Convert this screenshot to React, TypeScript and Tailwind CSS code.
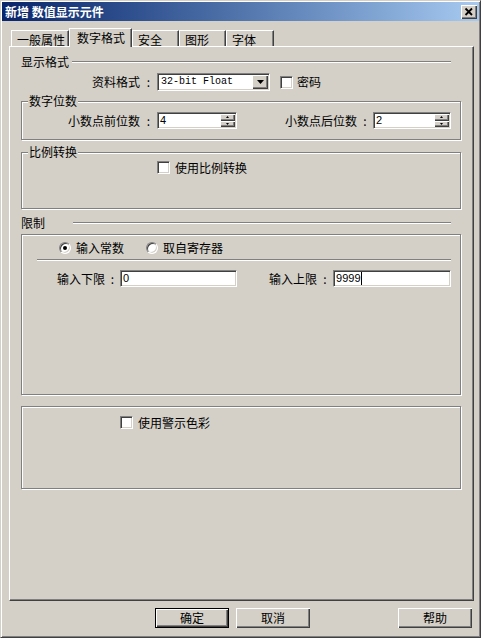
import React from "react"

const cjk = "font-['Noto_Sans_CJK_SC',sans-serif]"
const sunken =
  "bg-white border border-t-[#808080] border-l-[#808080] border-r-white border-b-white shadow-[inset_1px_1px_#404040,inset_-1px_-1px_#d4d0c8]"
const raised = "bg-[#d4d0c8] shadow-[inset_1px_1px_#fff,inset_-1px_-1px_#404040,inset_-2px_-2px_#808080]"
const etched = "border border-[#808080] shadow-[inset_1px_1px_#fff,1px_1px_#fff]"
const hline = "h-[2px] border-t border-t-[#808080] border-b border-b-white"

function Checkbox({ className = "" }: { className?: string }) {
  return <span className={`w-[13px] h-[13px] shrink-0 ${sunken} ${className}`} />
}

function Radio({ checked, className = "" }: { checked?: boolean; className?: string }) {
  return (
    <span
      className={`w-[12px] h-[12px] shrink-0 rounded-full bg-white border border-t-[#808080] border-l-[#808080] border-r-white border-b-white shadow-[inset_1px_1px_#404040,inset_-1px_-1px_#d4d0c8] flex items-center justify-center ${className}`}
    >
      {checked && <span className="w-[4px] h-[4px] rounded-full bg-black" />}
    </span>
  )
}

function Spin() {
  return (
    <div className="w-[15px] h-full flex flex-col shrink-0">
      <span className={`flex-1 flex items-center justify-center ${raised}`}>
        <svg width="3" height="2" viewBox="0 0 3 2">
          <polygon points="1.5,0 3,2 0,2" fill="#000" />
        </svg>
      </span>
      <span className={`flex-1 flex items-center justify-center ${raised}`}>
        <svg width="3" height="2" viewBox="0 0 3 2">
          <polygon points="0,0 3,0 1.5,2" fill="#000" />
        </svg>
      </span>
    </div>
  )
}

function NumField({ w, value, spin, cursor }: { w: string; value: string; spin?: boolean; cursor?: boolean }) {
  return (
    <div className={`${w} h-[17px] p-[1px] flex shrink-0 ${sunken}`}>
      <span className="flex-1 flex items-center pl-[1px] font-['Liberation_Sans',sans-serif] text-[11px] leading-[13px]">
        {value}
        {cursor && <span className="w-[1px] h-[13px] bg-black" />}
      </span>
      {spin && <Spin />}
    </div>
  )
}

function Tab({ label, w, active }: { label: string; w: string; active?: boolean }) {
  if (active) {
    return (
      <div
        className={`relative z-10 ${w} h-[19px] -mb-[1px] bg-[#d4d0c8] border-t border-l border-t-white border-l-white border-r border-r-[#404040] shadow-[inset_-1px_0_#808080] pl-[7px] pt-[3px]`}
      >
        {label}
      </div>
    )
  }
  return (
    <div
      className={`${w} h-[16px] border-t border-l border-t-white border-l-white border-r border-r-[#404040] shadow-[inset_-1px_0_#808080] pl-[5px] pt-[3px]`}
    >
      {label}
    </div>
  )
}

export default function App() {
  return (
    <div
      className={`w-[481px] h-[638px] bg-[#d4d0c8] border border-t-[#d4d0c8] border-l-[#d4d0c8] border-r-[#404040] border-b-[#404040] shadow-[inset_1px_1px_#fff,inset_-1px_-1px_#808080] p-[1px] flex flex-col text-[12px] leading-[12px] text-black ${cjk}`}
    >
      {/* title bar */}
      <div className="h-[19px] shrink-0 flex items-center justify-between pl-[3px] pr-[2px] bg-linear-to-r from-[#0a246a] to-[#a6caf0]">
        <span className="text-white font-bold">新增 数值显示元件</span>
        <span className={`w-[16px] h-[14px] flex items-center justify-center ${raised}`}>
          <svg width="16" height="14" viewBox="0 0 16 14">
            <path d="M4.5 3.5 L11 10 M11 3.5 L4.5 10" stroke="#000" strokeWidth="1.8" />
          </svg>
        </span>
      </div>

      {/* tabs */}
      <div className="h-[25px] shrink-0 flex items-end pl-[9px]">
        <Tab label="一般属性" w="w-[58px]" />
        <Tab label="数字格式" w="w-[63px]" active />
        <Tab label="安全" w="w-[47px]" />
        <Tab label="图形" w="w-[47px]" />
        <Tab label="字体" w="w-[48px]" />
      </div>

      {/* tab panel */}
      <div className="ml-[7px] w-[465px] h-[555px] shrink-0 border border-t-white border-l-white border-r-[#404040] border-b-[#404040] shadow-[inset_-1px_-1px_#808080] pl-[11px] pr-[12px] flex flex-col">
        <div className="mt-[9px] h-[12px] flex items-center">
          <span>显示格式</span>
          <span className={`ml-[3px] mr-[10px] flex-1 ${hline}`} />
        </div>

        <div className="mt-[5px] h-[18px] flex items-center">
          <span className="w-[119px] shrink-0 text-right">资料格式</span>
          <span className="w-[17px] shrink-0 text-center">:</span>
          <div className={`w-[113px] h-[18px] p-[1px] flex shrink-0 ${sunken}`}>
            <span className="flex-1 flex items-center pl-[2px] font-['Liberation_Mono',monospace] text-[10px]">
              32-bit Float
            </span>
            <span className={`w-[16px] h-full flex items-center justify-center ${raised}`}>
              <svg width="7" height="4" viewBox="0 0 7 4">
                <polygon points="0,0 7,0 3.5,4" fill="#000" />
              </svg>
            </span>
          </div>
          <Checkbox className="ml-[10px]" />
          <span className="ml-[4px]">密码</span>
        </div>

        <div className={`relative mt-[10px] h-[39px] shrink-0 pt-[10px] ${etched}`}>
          <span className="absolute left-[6px] -top-[7px] px-[1px] bg-[#d4d0c8]">数字位数</span>
          <div className="h-[17px] flex items-center">
            <span className="w-[118px] shrink-0 text-right">小数点前位数</span>
            <span className="w-[17px] shrink-0 text-center">:</span>
            <NumField w="w-[80px]" value="4" spin />
            <span className="w-[120px] shrink-0 text-right">小数点后位数</span>
            <span className="w-[16px] shrink-0 text-center">:</span>
            <NumField w="w-[78px]" value="2" spin />
          </div>
        </div>

        <div className={`relative mt-[12px] h-[57px] shrink-0 pt-[8px] ${etched}`}>
          <span className="absolute left-[6px] -top-[7px] px-[1px] bg-[#d4d0c8]">比例转换</span>
          <div className="h-[13px] flex items-center">
            <Checkbox className="ml-[135px]" />
            <span className="ml-[5px]">使用比例转换</span>
          </div>
        </div>

        <div className="mt-[8px] h-[12px] flex items-center">
          <span>限制</span>
          <span className={`ml-[28px] mr-[10px] flex-1 ${hline}`} />
        </div>

        <div className={`mt-[5px] h-[161px] shrink-0 pt-[7px] flex flex-col ${etched}`}>
          <div className="h-[12px] flex items-center">
            <Radio checked className="ml-[37px]" />
            <span className="ml-[5px]">输入常数</span>
            <Radio className="ml-[22px]" />
            <span className="ml-[5px]">取自寄存器</span>
          </div>
          <span className={`mt-[5px] ml-[15px] mr-[9px] ${hline}`} />
          <div className="mt-[9px] h-[17px] flex items-center">
            <span className="ml-[35px]">输入下限</span>
            <span className="w-[15px] shrink-0 text-center">:</span>
            <NumField w="w-[117px]" value="0" />
            <span className="ml-[32px]">输入上限</span>
            <span className="w-[16px] shrink-0 text-center">:</span>
            <NumField w="w-[118px]" value="9999" cursor />
          </div>
        </div>

        <div className={`mt-[11px] h-[83px] shrink-0 pt-[9px] ${etched}`}>
          <div className="h-[13px] flex items-center">
            <Checkbox className="ml-[98px]" />
            <span className="ml-[5px]">使用警示色彩</span>
          </div>
        </div>
      </div>

      {/* buttons */}
      <div className="mt-[7px] h-[20px] shrink-0 flex">
        <div className="ml-[153px] w-[74px] h-[20px] border border-black bg-[#d4d0c8] shadow-[inset_1px_1px_#fff,inset_-1px_-1px_#404040,inset_-2px_-2px_#808080] flex items-center justify-center">
          确定
        </div>
        <div className={`ml-[7px] w-[74px] h-[20px] flex items-center justify-center ${raised}`}>取消</div>
        <div className={`ml-[88px] w-[74px] h-[20px] flex items-center justify-center ${raised}`}>帮助</div>
      </div>
    </div>
  )
}
